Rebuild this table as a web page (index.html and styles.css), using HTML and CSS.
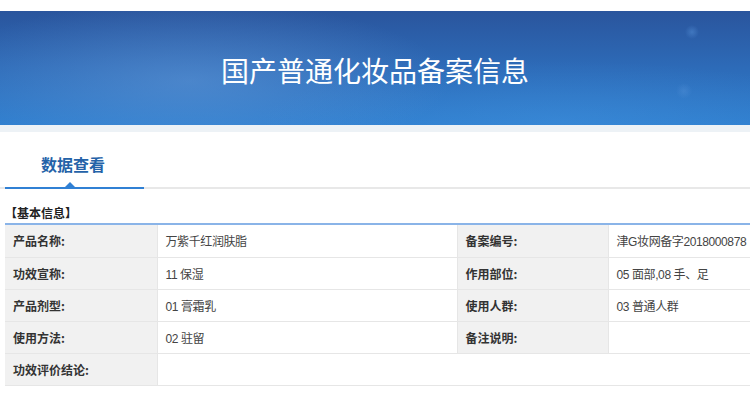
FILE: index.html
```html
<!DOCTYPE html>
<html lang="zh-CN">
<head>
    <meta charset="UTF-8">
    <meta name="viewport" content="width=device-width, initial-scale=1.0">
    <title>国产普通化妆品备案信息</title>
    <link rel="stylesheet" href="styles.css">
</head>
<body>
    <div class="top-gap"></div>
    <header class="banner">
        <h1>国产普通化妆品备案信息</h1>
    </header>
    <div class="banner-strip"></div>

    <div class="tabs">
        <div class="tab active">数据查看</div>
    </div>

    <div class="section">
        <div class="section-title">【基本信息】</div>
        <table class="info-table">
            <colgroup>
                <col class="col-label">
                <col class="col-value">
                <col class="col-label2">
                <col>
            </colgroup>
            <tr>
                <th>产品名称:</th>
                <td>万紫千红润肤脂</td>
                <th>备案编号:</th>
                <td>津G妆网备字2018000878</td>
            </tr>
            <tr>
                <th>功效宣称:</th>
                <td>11 保湿</td>
                <th>作用部位:</th>
                <td>05 面部,08 手、足</td>
            </tr>
            <tr>
                <th>产品剂型:</th>
                <td>01 膏霜乳</td>
                <th>使用人群:</th>
                <td>03 普通人群</td>
            </tr>
            <tr>
                <th>使用方法:</th>
                <td>02 驻留</td>
                <th>备注说明:</th>
                <td></td>
            </tr>
            <tr>
                <th>功效评价结论:</th>
                <td colspan="3"></td>
            </tr>
        </table>
    </div>
</body>
</html>
```

FILE: styles.css
```css
* {
    margin: 0;
    padding: 0;
    box-sizing: border-box;
}

body {
    font-family: "Noto Sans CJK SC", "Noto Sans", sans-serif;
    background: #fff;
    color: #333;
    overflow: hidden;
}

.top-gap {
    height: 11px;
    background: #fff;
}

.banner {
    height: 114px;
    display: flex;
    align-items: center;
    justify-content: center;
    background:
        radial-gradient(circle at 692px 21px, rgba(90, 150, 220, 0.45) 0, rgba(90, 150, 220, 0) 7px),
        radial-gradient(circle at 684px 80px, rgba(90, 150, 220, 0.35) 0, rgba(90, 150, 220, 0) 8px),
        radial-gradient(ellipse 260px 80px at 190px 70px, rgba(110, 160, 220, 0.45), rgba(110, 160, 220, 0)),
        radial-gradient(ellipse 300px 60px at 560px 110px, rgba(70, 150, 225, 0.35), rgba(70, 150, 225, 0)),
        linear-gradient(180deg, #2a559d 0%, #2d6bb8 50%, #2f7fcf 100%);
}

.banner h1 {
    color: #fff;
    font-size: 28px;
    font-weight: normal;
    margin-top: 3px;
}

.banner-strip {
    height: 7px;
    background: #edf2f6;
}

.tabs {
    height: 57px;
    padding-left: 5px;
    display: flex;
    align-items: flex-end;
    border-bottom: 2px solid #e8e8e8;
}

.tab {
    position: relative;
    width: 139px;
    height: 57px;
    margin-bottom: -2px;
    padding-left: 36px;
    padding-top: 20px;
    font-size: 16px;
    font-weight: bold;
    color: #2462a8;
    border-bottom: 2px solid #3080d4;
}

.tab.active::after {
    content: "";
    position: absolute;
    left: 60px;
    bottom: 0;
    border-left: 5px solid transparent;
    border-right: 5px solid transparent;
    border-bottom: 5px solid #3080d4;
}

.section {
    padding: 17px 0 0 5px;
}

.section-title {
    font-size: 12px;
    font-weight: bold;
    color: #222;
    line-height: 14px;
    padding-bottom: 3px;
    border-bottom: 2px solid #8ab4e8;
}

.info-table {
    width: 780px;
    border-collapse: collapse;
    table-layout: fixed;
    font-size: 12px;
}

.col-label {
    width: 152px;
}

.col-value {
    width: 300px;
}

.col-label2 {
    width: 151px;
}

.info-table th,
.info-table td {
    height: 32px;
    padding: 0 8px;
    text-align: left;
    border-bottom: 1px solid #e6e6e6;
    white-space: nowrap;
}

.info-table th {
    background: #f1f1f1;
    font-weight: bold;
    color: #333;
    border-right: 1px solid #e6e6e6;
}

.info-table td {
    font-family: "Liberation Sans", "Noto Sans CJK SC", sans-serif;
    letter-spacing: -0.4px;
    color: #444;
    border-right: 1px solid #e6e6e6;
}
```
